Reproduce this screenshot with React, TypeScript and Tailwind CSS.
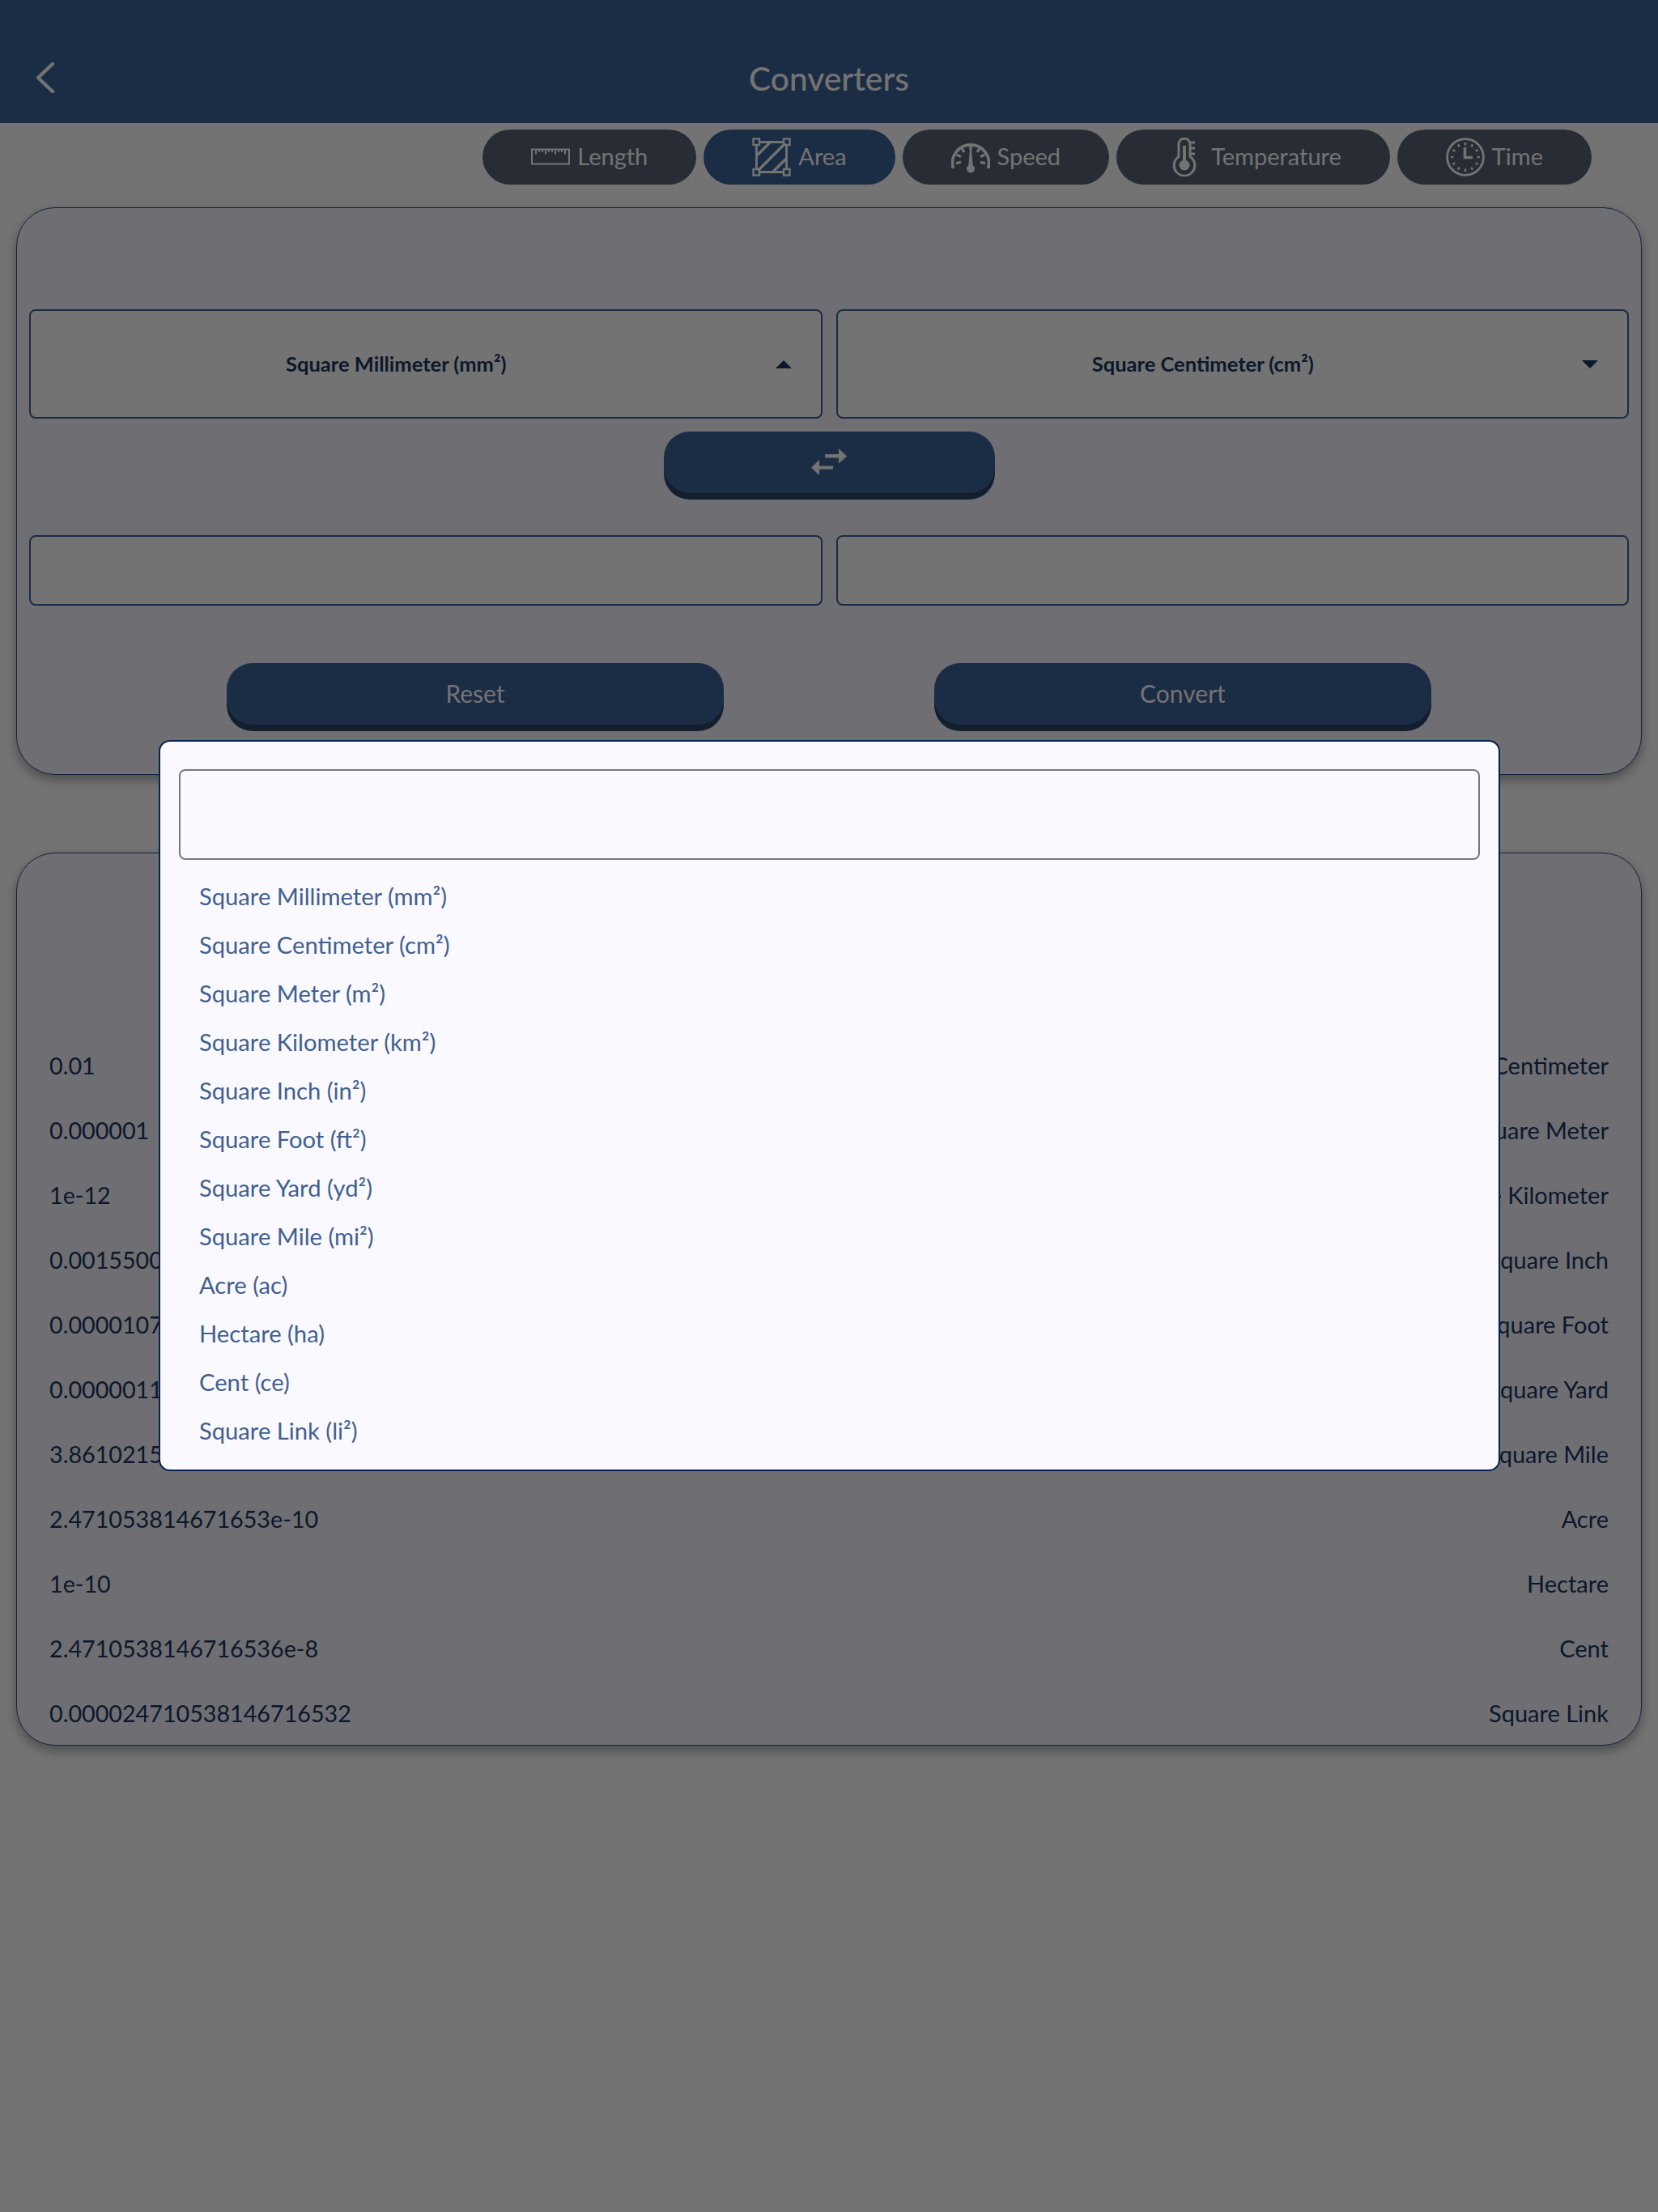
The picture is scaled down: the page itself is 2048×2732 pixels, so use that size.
import { ReactNode } from 'react'

const units = [
  'Square Millimeter (mm²)',
  'Square Centimeter (cm²)',
  'Square Meter (m²)',
  'Square Kilometer (km²)',
  'Square Inch (in²)',
  'Square Foot (ft²)',
  'Square Yard (yd²)',
  'Square Mile (mi²)',
  'Acre (ac)',
  'Hectare (ha)',
  'Cent (ce)',
  'Square Link (li²)',
]

const results = [
  ['0.01', 'Square Centimeter'],
  ['0.000001', 'Square Meter'],
  ['1e-12', 'Square Kilometer'],
  ['0.0015500031000062', 'Square Inch'],
  ['0.000010763910416709721', 'Square Foot'],
  ['0.0000011959900463010802', 'Square Yard'],
  ['3.8610215854244585e-13', 'Square Mile'],
  ['2.471053814671653e-10', 'Acre'],
  ['1e-10', 'Hectare'],
  ['2.4710538146716536e-8', 'Cent'],
  ['0.000024710538146716532', 'Square Link'],
]

function RulerIcon() {
  return (
    <svg viewBox="0 0 48 48" className="h-12 w-12" fill="none" stroke="white" strokeWidth="2">
      <rect x="1" y="14.5" width="46" height="18" />
      <path d="M6 14.5v6M10 14.5v3.500M14 14.5v3.500M18 14.5v6M22 14.5v3.500M26 14.5v3.500M30 14.5v6M34 14.5v3.500M38 14.5v3.500M42 14.5v6" />
    </svg>
  )
}

function AreaIcon() {
  return (
    <svg viewBox="0 0 48 48" className="h-12 w-12" fill="none" stroke="white" strokeWidth="2.4">
      <rect x="1.500" y="1.500" width="7.500" height="7.500" />
      <rect x="39" y="1.500" width="7.500" height="7.500" />
      <rect x="1.500" y="39" width="7.500" height="7.500" />
      <rect x="39" y="39" width="7.500" height="7.500" />
      <path d="M9 5.500h30M9 42.500h30M5.500 9v30M42.500 9v30" strokeWidth="2.800" />
      <path d="M5 23L23 5M7 41L41 7M25 43L43 25" strokeWidth="3.200" />
    </svg>
  )
}

function SpeedIcon() {
  return (
    <svg viewBox="0 0 48 48" className="h-12 w-12" fill="none" stroke="white">
      <path d="M2.500 38A22.500 22.500 0 1 1 45.500 38" strokeWidth="3.600" />
      <path
        d="M24 9.500v6M13 13l3 5M35 13l-3 5M6.500 21l5.500 2.500M41.500 21L36 23.500M6 32l6-2M42 32l-6-2"
        strokeWidth="3.200"
      />
      <path d="M23 15h2l1.800 20h-5.600z" fill="white" stroke="none" />
      <circle cx="24" cy="38.500" r="5" fill="white" stroke="none" />
    </svg>
  )
}

function ThermometerIcon() {
  return (
    <svg viewBox="0 0 48 48" className="h-12 w-12" fill="none" stroke="white" strokeWidth="3">
      <path d="M17 23.500V8a7 7 0 0 1 14 0v15.500a12.800 12.800 0 1 1-14 0z" />
      <path d="M31 6h6M31 13h6M31 20h6" strokeWidth="3" />
      <circle cx="24" cy="34" r="6.500" fill="white" stroke="none" />
      <rect x="22" y="10" width="4" height="22" fill="white" stroke="none" />
    </svg>
  )
}

function TimeIcon() {
  const ticks = Array.from({ length: 12 }, (_, i) => i * 30)
  return (
    <svg viewBox="0 0 48 48" className="h-12 w-12" fill="none" stroke="white">
      <circle cx="24" cy="24" r="22.400" strokeWidth="2.800" />
      {ticks.map((a) => (
        <path key={a} d="M24 6v3.400" strokeWidth="2.400" transform={`rotate(${a} 24 24)`} />
      ))}
      <path d="M23.500 12v12.500H33" strokeWidth="3.600" />
    </svg>
  )
}

function Tab({ icon, label, active }: { icon: ReactNode; label: string; active?: boolean }) {
  return (
    <div
      className={`flex h-[68px] items-center gap-[9px] rounded-[34px] px-[60px] text-[29px] text-white ${
        active ? 'bg-[#3c6299]' : 'bg-[#596276]'
      }`}
    >
      {icon}
      <span className="pb-[2px]">{label}</span>
    </div>
  )
}

function UnitSelect({ label, open }: { label: string; open?: boolean }) {
  return (
    <div className="flex h-[135px] flex-1 items-center rounded-lg border-2 border-[#3c6299] bg-white pr-[36px]">
      <span className="flex-1 text-center text-[25.500px] font-bold text-[#1c3660]">{label}</span>
      <span
        className={`ml-[17px] h-0 w-0 border-x-[10px] border-x-transparent ${
          open ? 'border-b-[10px] border-b-[#1c3660]' : 'border-t-[10px] border-t-[#1c3660]'
        }`}
      />
    </div>
  )
}

function ActionButton({ children, className }: { children: ReactNode; className: string }) {
  return (
    <div
      className={`flex h-[76px] items-center justify-center rounded-[32px] bg-[#3c6299] pb-[2px] text-[30px] text-white shadow-[0_8px_0_#2a4566] ${className}`}
    >
      {children}
    </div>
  )
}

export default function App() {
  return (
    <div className="relative h-screen overflow-hidden bg-white font-['Lato',sans-serif]">
      {/* header */}
      <div className="relative flex h-[152px] items-center justify-center bg-[#3c6299] pt-[42px]">
        <svg
          viewBox="0 0 24 40"
          className="absolute left-[44px] top-[76px] h-[40px] w-[24px]"
          fill="none"
          stroke="white"
          strokeWidth="4.400"
          strokeLinecap="round"
          strokeLinejoin="round"
        >
          <path d="M21 3L3 20l18 17" />
        </svg>
        <h1 className="text-[40.700px] font-medium text-white">Converters</h1>
      </div>

      {/* tabs */}
      <div className="mt-2 flex justify-end gap-[9px] pr-[82px]">
        <Tab icon={<RulerIcon />} label="Length" />
        <Tab icon={<AreaIcon />} label="Area" active />
        <Tab icon={<SpeedIcon />} label="Speed" />
        <Tab icon={<ThermometerIcon />} label="Temperature" />
        <Tab icon={<TimeIcon />} label="Time" />
      </div>

      {/* converter card */}
      <div className="mx-5 mt-7 h-[701px] rounded-[48px] border border-[#2f4f80] bg-[#f4f4ff] px-[15px] pt-[125px] shadow-[0_6px_14px_rgba(0,0,0,0.35)]">
        <div className="flex gap-[17px]">
          <UnitSelect label="Square Millimeter (mm²)" open />
          <UnitSelect label="Square Centimeter (cm²)" />
        </div>
        <div className="mt-4 flex justify-center">
          <ActionButton className="w-[409px]">
            <svg viewBox="0 0 44 33" className="h-[33px] w-[44px]" fill="white">
              <path d="M17 7h17V0l10 9.500L34 18.500V11.500H17z" />
              <path d="M27 21.500H10V14L0 23.500 10 33v-7.500h17z" />
            </svg>
          </ActionButton>
        </div>
        <div className="mt-[52px] flex gap-[17px]">
          <div className="h-[87px] flex-1 rounded-lg border-2 border-[#3c6299] bg-white" />
          <div className="h-[87px] flex-1 rounded-lg border-2 border-[#3c6299] bg-white" />
        </div>
        <div className="mt-[71px] flex gap-[260px] pl-[244px]">
          <ActionButton className="w-[614px]">Reset</ActionButton>
          <ActionButton className="w-[614px]">Convert</ActionButton>
        </div>
      </div>

      {/* results card */}
      <div className="mx-5 mt-[96px] flex h-[1103px] flex-col gap-[34px] rounded-[48px] border border-[#2f4f80] bg-[#f4f4ff] px-10 pt-[239px] shadow-[0_6px_14px_rgba(0,0,0,0.35)]">
        {results.map(([value, unit]) => (
          <div
            key={unit}
            className="flex h-[46px] items-baseline justify-between text-[29px] leading-[46px] text-[#1c3660]"
          >
            <span className="text-[28.700px]">{value}</span>
            <span>{unit}</span>
          </div>
        ))}
      </div>

      {/* dim layer behind the unit picker */}
      <div className="absolute inset-0 bg-black/55" />

      {/* unit picker */}
      <div className="absolute left-[196px] top-[914px] h-[903px] w-[1657px] rounded-[14px] border-2 border-[#07234d] bg-[#f9f9ff] px-[23px] pt-[34px]">
        <div className="h-[112px] rounded-lg border-2 border-[#77787e]" />
        <ul className="mt-[15px] px-[25px]">
          {units.map((unit) => (
            <li key={unit} className="flex h-[60px] items-center text-[29.200px] text-[#41608f]">
              {unit}
            </li>
          ))}
        </ul>
      </div>
    </div>
  )
}
